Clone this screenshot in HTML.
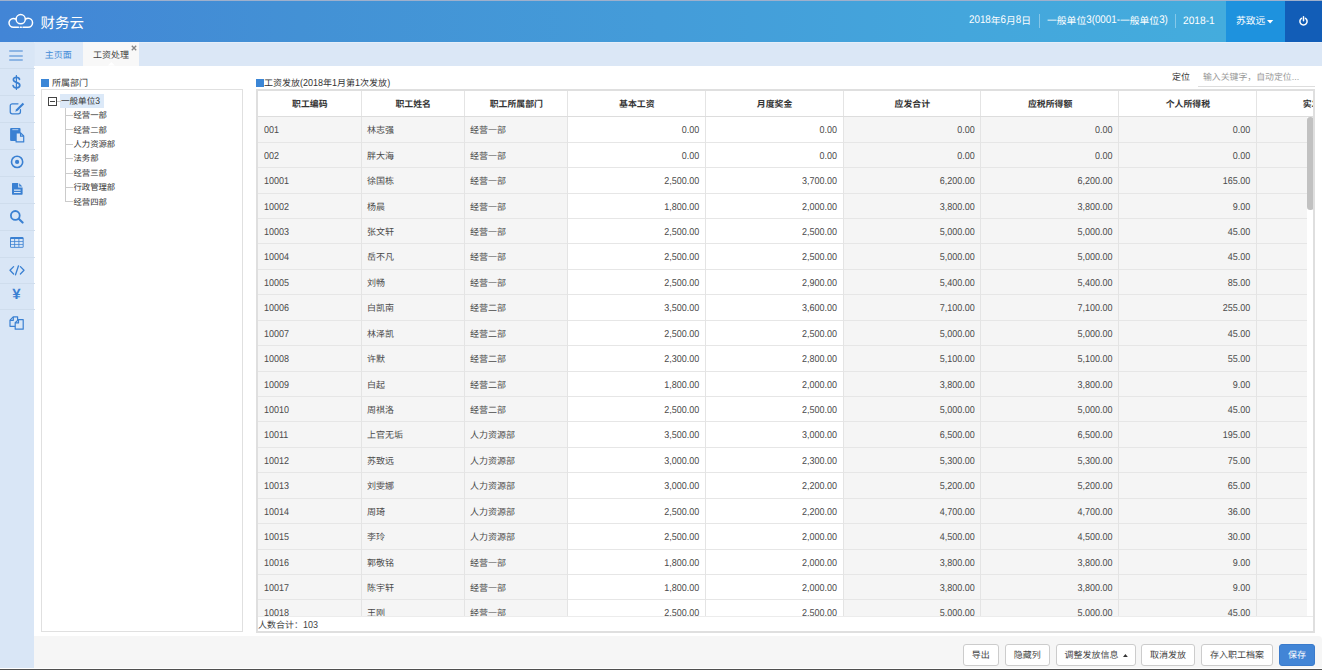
<!DOCTYPE html>
<html lang="zh-CN">
<head>
<meta charset="utf-8">
<title>财务云</title>
<style>
*{box-sizing:border-box;margin:0;padding:0}
html,body{width:1323px;height:671px;overflow:hidden;background:#fff}
body{font-family:"Liberation Sans","Noto Sans CJK SC",sans-serif;font-size:9px;color:#333;position:relative;text-rendering:geometricPrecision}
.abs{position:absolute}
#topline{left:0;top:0;width:1322px;height:1px;background:#9fb0cc}
#hdr{left:0;top:1px;width:1322px;height:41px;background:linear-gradient(90deg,#4285d6 0,#4391d5 300px,#449cd9 660px,#44a6dc 960px,#44acdd 1225px)}
#brand{left:40.5px;top:13.6px;font-size:14.5px;color:#fff;line-height:20px;white-space:nowrap}
.ht{top:0.5px;height:41px;line-height:41px;color:#fff;font-size:9.8px;white-space:nowrap}
.sep{top:14px;width:1px;height:14px;background:rgba(255,255,255,.35)}
#user{left:1226px;top:1px;width:59px;height:41px;background:#1e92de}
#power{left:1285px;top:1px;width:37px;height:41px;background:#125db7}
#side{left:0;top:42px;width:34.3px;height:626px;background:#d9e6f6}
#tabbar{left:0;top:42px;width:1322px;height:24px;background:#dbe7f6}
#tab1{left:34.5px;top:42px;width:48.5px;height:24px;background:#dfeaf8;color:#3f8ad6;text-align:center;line-height:26.5px;padding-right:1px;font-size:9px}
#tab2{left:83px;top:42px;width:56px;height:24px;background:#f8f8f8;color:#444;line-height:26.5px;font-size:9px;padding-left:10px}
#content{left:34.5px;top:66px;width:1287.5px;height:571px;background:#fff}
.sq{width:8px;height:8px;background:#3b86d6}
.ttl{font-size:9px;line-height:12px;color:#333;white-space:nowrap}
#treebox{left:41.2px;top:89.3px;width:201.5px;height:542.4px;border:1.1px solid #e0e0e0;background:#fff}
#tbl{left:256.25px;top:89.2px;width:1058.6px;height:543.4px;background:#dfdfdf}
#tin{left:1.75px;top:1.8px;width:1055.1px;height:540px;background:#fff;overflow:hidden}
.cbg{position:absolute;top:26px;height:500px;background:#f5f5f5}
.hbg{position:absolute;left:0;top:0;width:1056px;height:25px;background:#fff}
.hl{position:absolute;left:0;width:1049px;height:1px;background:#e6e6e6}
.vl{position:absolute;top:0;width:1px;height:526px;background:#e4e4e4}
.th{position:absolute;top:0;height:25px;line-height:26.4px;text-align:center;font-weight:bold;font-size:8.9px;color:#333;white-space:nowrap;overflow:hidden}
#hline{left:0;top:25px;width:1056px;height:1.5px;background:#ddd}
.td{position:absolute;height:25.42px;line-height:26.3px;padding:0 7px 0 6px;font-size:9px;color:#4a4a4a;white-space:nowrap;overflow:hidden}
.td.n{text-align:right;padding-right:6.4px}
.td.d,.td.n{transform:scaleY(1.1);transform-origin:50% 66%}
#tfoot{left:0;top:525.3px;width:1056px;height:15px;background:#fff;line-height:16px;border-top:1px solid #ececec;font-size:9px;color:#444}
#vscroll{left:1049px;top:26px;width:7px;height:500px;background:#fff}
#thumb{left:0.2px;top:0;width:6.6px;height:93.5px;border-radius:3.3px;background:#c1c1c1}
#fbar{left:34.3px;top:636.2px;width:1287.7px;height:31.8px;background:#f6f6f6;border-radius:0 4px 0 0}
#bline{left:0;top:668.8px;width:1322px;height:1px;background:#505050}
.btn{top:644px;height:22px;line-height:21.6px;border:1px solid #ccc;border-radius:3px;background:#fff;color:#444;text-align:center;font-size:9px;white-space:nowrap}
.btn.p{background:#4285d6;border-color:#3a7bcc;color:#fff}
.sitem{left:0;width:34.5px;height:1px;background:#cfdded}
.dg{display:inline-block;transform:scaleY(1.13);transform-origin:50% 72%}
.tn{position:absolute;white-space:nowrap;font-size:8.35px;line-height:12px;color:#333}
</style>
</head>
<body>
<div class="abs" id="topline"></div>
<div class="abs" id="hdr"></div>
<svg class="abs" style="left:7px;top:11.700px" width="28" height="18" viewBox="0 0 28 18"><g fill="none" stroke="#fff" stroke-width="1.500" stroke-linecap="round"><path d="M11.5 15.2H6.4a4.4 4.4 0 0 1 0-8.8c.8 0 1.6.2 2.300.6"/><circle cx="13.7" cy="7.2" r="4.6"/><path d="M18.7 7a4.400 4.400 0 0 1 2.400-.7 4.400 4.400 0 0 1 0 8.900H16"/><path d="M13.300 15.200h1"/></g></svg>
<div class="abs" id="brand">财务云</div>
<div class="abs ht" style="left:969px"><span class="dg">2018</span>年<span class="dg">6</span>月<span class="dg">8</span>日</div>
<div class="abs sep" style="left:1039px"></div>
<div class="abs ht" style="left:1047px">一般单位<span class="dg">3(0001-</span>一般单位<span class="dg">3)</span></div>
<div class="abs sep" style="left:1175px"></div>
<div class="abs ht" style="left:1183px;font-size:10.200px"><span class="dg" style="transform:scaleY(1.06)">2018-1</span></div>
<div class="abs" id="user"></div>
<div class="abs ht" style="left:1236px">苏致远</div>
<svg class="abs" style="left:1266.700px;top:19.700px" width="7" height="4" viewBox="0 0 7 4"><path d="M0 0h6.300L3.150 3.500z" fill="#fff"/></svg>
<div class="abs" id="power"></div>
<svg class="abs" style="left:1298px;top:15px" width="11" height="12" viewBox="0 0 11 12"><g fill="none" stroke="#fff" stroke-width="1.500" stroke-linecap="round"><path d="M3.500 3.400a3.600 3.600 0 1 0 4 0"/><path d="M5.500 1.700v4"/></g></svg>

<div class="abs" id="tabbar"></div>
<div class="abs" style="left:0;top:42px;width:1322px;height:1px;background:#e5eef9"></div>
<div class="abs" id="side"></div>
<div class="abs" id="tab1">主页面</div>
<div class="abs" id="tab2">工资处理</div>
<svg class="abs" style="left:130.800px;top:45.200px" width="6" height="6" viewBox="0 0 6 6"><path d="M.8.800l4.400 4.400M5.200.800L.8 5.200" stroke="#858585" stroke-width="1.350"/></svg>
<div class="abs" id="content"></div>
<svg class="abs" style="left:107.500px;top:62.400px" width="7" height="4" viewBox="0 0 7 4"><path d="M0 3.600L3.400 0 6.800 3.600z" fill="#fff"/></svg>

<!-- sidebar icons -->
<!-- hamburger -->
<div class="abs" style="left:9px;top:50.400px;width:14px;height:2px;background:#8db5e4;border-radius:1px"></div>
<div class="abs" style="left:9px;top:54.700px;width:14px;height:2px;background:#8db5e4;border-radius:1px"></div>
<div class="abs" style="left:9px;top:59.100px;width:14px;height:2px;background:#8db5e4;border-radius:1px"></div>
<div class="abs sitem" style="top:68px"></div>
<div class="abs sitem" style="top:95px"></div>
<div class="abs sitem" style="top:122px"></div>
<div class="abs sitem" style="top:149px"></div>
<div class="abs sitem" style="top:176px"></div>
<div class="abs sitem" style="top:202.500px"></div>
<div class="abs sitem" style="top:229.500px"></div>
<div class="abs sitem" style="top:256.500px"></div>
<div class="abs sitem" style="top:283px"></div>
<div class="abs sitem" style="top:309px"></div>
<!-- dollar -->
<svg class="abs" style="left:12.200px;top:74.500px" width="9" height="15" viewBox="0 0 9 15"><g fill="none" stroke="#3a80d2" stroke-linecap="round"><path d="M4.400.500v14" stroke-width="1.200"/><path d="M7.500 4.300C7.200 2.900 6 2.300 4.400 2.300 2.700 2.300 1.400 3.200 1.400 4.700c0 1.700 1.500 2.200 3.100 2.700 1.700.5 3.300 1.100 3.300 2.900 0 1.600-1.400 2.600-3.300 2.600-1.700 0-3-.8-3.400-2.300" stroke-width="1.700"/></g></svg>
<!-- edit -->
<svg class="abs" style="left:8.500px;top:101.500px" width="16" height="13" viewBox="0 0 16 13"><path d="M9 1.750H3.300A2.050 2.050 0 0 0 1.250 3.800v5.900A2.050 2.050 0 0 0 3.300 11.750h6.100A2.050 2.050 0 0 0 11.450 9.700V7.600" fill="none" stroke="#3a80d2" stroke-width="1.250" stroke-linecap="round"/><path d="M6.200 9.800L7.200 7.300 13.700.800 15.200 2.300 8.700 8.800z" fill="#3a80d2"/></svg>
<!-- paste -->
<svg class="abs" style="left:9.500px;top:128px" width="15" height="15" viewBox="0 0 15 15"><path d="M1.100 0H9.500a1 1 0 0 1 1 1V13H1.100a1 1 0 0 1-1-1V1a1 1 0 0 1 1-1z" fill="#3a80d2"/><path d="M2.300 1h6v1.200H2.300z" fill="#9dbfea"/><path d="M6.100 4.900H10.600L13.700 8V13.900H6.100z" fill="#d9e6f6" stroke="#3a80d2" stroke-width="1.200" stroke-linejoin="round"/><path d="M10.500 5v3.100h3.100" fill="none" stroke="#3a80d2" stroke-width="1.100"/></svg>
<!-- dot circle -->
<svg class="abs" style="left:9.500px;top:155.300px" width="14" height="14" viewBox="0 0 14 14"><circle cx="7.100" cy="6.900" r="5.600" fill="none" stroke="#3a80d2" stroke-width="1.600"/><circle cx="7.100" cy="6.900" r="2.100" fill="#3a80d2"/></svg>
<!-- file text -->
<svg class="abs" style="left:11.500px;top:183.200px" width="11" height="12" viewBox="0 0 11 12"><path d="M.6 0H6.200V4.400H10.600V11.100a.6.600 0 0 1-.6.600H.6a.6.600 0 0 1-.6-.6V.6A.6.600 0 0 1 .6 0zM7.200.300L10.300 3.400H7.200z" fill="#3a80d2"/><path d="M2 6.600h6.600v1.200H2zM2 8.900h6.600v1.200H2z" fill="#d9e6f6"/></svg>
<!-- search -->
<svg class="abs" style="left:9px;top:208.500px" width="15" height="15" viewBox="0 0 15 15"><circle cx="6.300" cy="6.400" r="4.400" fill="none" stroke="#3a80d2" stroke-width="1.800"/><path d="M9.700 9.800l3.900 3.800" stroke="#3a80d2" stroke-width="2.100" stroke-linecap="round"/></svg>
<!-- table -->
<svg class="abs" style="left:9.800px;top:237px" width="14" height="11" viewBox="0 0 14 11"><rect x="0" y="0" width="13.600" height="10.700" rx="1.300" fill="#3a80d2"/><g fill="#d9e6f6"><rect x=".9" y="2" width="3.400" height="2.200"/><rect x="5.100" y="2" width="3.400" height="2.200"/><rect x="9.300" y="2" width="3.400" height="2.200"/><rect x=".9" y="4.900" width="3.400" height="2.200"/><rect x="5.100" y="4.900" width="3.400" height="2.200"/><rect x="9.300" y="4.900" width="3.400" height="2.200"/><rect x=".9" y="7.800" width="3.400" height="2.100"/><rect x="5.100" y="7.800" width="3.400" height="2.100"/><rect x="9.300" y="7.800" width="3.400" height="2.100"/></g></svg>
<!-- code -->
<svg class="abs" style="left:8.500px;top:265px" width="16" height="11" viewBox="0 0 16 11"><g fill="none" stroke="#3a80d2" stroke-width="1.300" stroke-linecap="round" stroke-linejoin="round"><path d="M4.600 1.600L1 5.300l3.600 3.700"/><path d="M11.400 1.600L15 5.300l-3.600 3.700"/><path d="M9.500 .8L6.500 9.800"/></g></svg>
<!-- yen -->
<div class="abs" style="left:12.200px;top:286px;font-size:15px;line-height:18px;color:#3a80d2;font-weight:bold">¥</div>
<!-- copy -->
<svg class="abs" style="left:9px;top:316px" width="16" height="14" viewBox="0 0 16 14"><g fill="none" stroke="#3a80d2" stroke-width="1.200" stroke-linejoin="round"><path d="M6.200 10.300H1V4.100L4.200 .8H8.600V4"/><path d="M4.300 1v3.300H1"/><path d="M6.200 13.200V6.700L9.400 3.600H14.200V13.200z"/><path d="M9.500 3.800v3.100H6.300"/></g></svg>


<!-- left panel -->
<div class="abs sq" style="left:41px;top:78.500px"></div>
<div class="abs ttl" style="left:52px;top:76.500px">所属部门</div>
<div class="abs" id="treebox"></div>
<div class="abs" style="left:60px;top:93.500px;width:44px;height:14.500px;background:#dce9f8"></div>
<div class="abs" style="left:48px;top:96.500px;width:9px;height:9px;border:1px solid #444;background:#fff"></div>
<div class="abs" style="left:50px;top:100.500px;width:5px;height:1px;background:#444"></div>
<div class="abs" style="left:57px;top:100.500px;width:4px;height:0;border-top:1px solid #cbcbcb"></div>
<div class="tn" style="left:61px;top:94.700px;font-size:8.550px">一般单位<span class="dg">3</span></div>
<div class="abs" style="left:65px;top:108px;width:0;height:93.500px;border-left:1px solid #cbcbcb"></div>
<div class="abs" style="left:66px;top:115px;width:6.500px;height:0;border-top:1px solid #cbcbcb"></div>
<div class="tn" style="left:73.500px;top:109.200px">经营一部</div>
<div class="abs" style="left:66px;top:129.400px;width:6.500px;height:0;border-top:1px solid #cbcbcb"></div>
<div class="tn" style="left:73.500px;top:123.600px">经营二部</div>
<div class="abs" style="left:66px;top:143.800px;width:6.500px;height:0;border-top:1px solid #cbcbcb"></div>
<div class="tn" style="left:73.500px;top:138px">人力资源部</div>
<div class="abs" style="left:66px;top:158.200px;width:6.500px;height:0;border-top:1px solid #cbcbcb"></div>
<div class="tn" style="left:73.500px;top:152.400px">法务部</div>
<div class="abs" style="left:66px;top:172.600px;width:6.500px;height:0;border-top:1px solid #cbcbcb"></div>
<div class="tn" style="left:73.500px;top:166.800px">经营三部</div>
<div class="abs" style="left:66px;top:187px;width:6.500px;height:0;border-top:1px solid #cbcbcb"></div>
<div class="tn" style="left:73.500px;top:181.200px">行政管理部</div>
<div class="abs" style="left:66px;top:201.400px;width:6.500px;height:0;border-top:1px solid #cbcbcb"></div>
<div class="tn" style="left:73.500px;top:195.600px">经营四部</div>


<!-- right panel -->
<div class="abs sq" style="left:256px;top:78.500px"></div>
<div class="abs ttl" style="left:264px;top:76.500px">工资发放<span class="dg">(2018</span>年<span class="dg">1</span>月第<span class="dg">1</span>次发放<span class="dg">)</span></div>
<div class="abs ttl" style="left:1172px;top:71px;font-size:9px">定位</div>
<div class="abs ttl" style="left:1203px;top:71px;color:#999;font-size:8.900px">输入关键字，自动定位...</div>
<div class="abs" style="left:1198px;top:86.400px;width:117px;height:1px;background:#ddd"></div>

<div class="abs" id="tbl"><div class="abs" id="tin">
<div class="cbg" style="left:0.00px;width:103.70px"></div>
<div class="cbg" style="left:103.70px;width:103.00px"></div>
<div class="cbg" style="left:206.70px;width:103.30px"></div>
<div class="cbg" style="left:585.50px;width:137.70px"></div>
<div class="cbg" style="left:723.20px;width:137.80px"></div>
<div class="cbg" style="left:861.00px;width:137.70px"></div>
<div class="cbg" style="left:998.70px;width:138.00px"></div>
<div class="hl" style="top:50.82px"></div>
<div class="hl" style="top:76.24px"></div>
<div class="hl" style="top:101.66px"></div>
<div class="hl" style="top:127.08px"></div>
<div class="hl" style="top:152.50px"></div>
<div class="hl" style="top:177.92px"></div>
<div class="hl" style="top:203.34px"></div>
<div class="hl" style="top:228.76px"></div>
<div class="hl" style="top:254.18px"></div>
<div class="hl" style="top:279.60px"></div>
<div class="hl" style="top:305.02px"></div>
<div class="hl" style="top:330.44px"></div>
<div class="hl" style="top:355.86px"></div>
<div class="hl" style="top:381.28px"></div>
<div class="hl" style="top:406.70px"></div>
<div class="hl" style="top:432.12px"></div>
<div class="hl" style="top:457.54px"></div>
<div class="hl" style="top:482.96px"></div>
<div class="hl" style="top:508.38px"></div>
<div class="hl" style="top:533.80px"></div>
<div class="hbg"></div>
<div class="vl" style="left:102.70px"></div>
<div class="vl" style="left:205.70px"></div>
<div class="vl" style="left:309.00px"></div>
<div class="vl" style="left:446.70px"></div>
<div class="vl" style="left:584.50px"></div>
<div class="vl" style="left:722.20px"></div>
<div class="vl" style="left:860.00px"></div>
<div class="vl" style="left:997.70px"></div>
<div class="th" style="left:0.00px;width:103.70px">职工编码</div>
<div class="th" style="left:103.70px;width:103.00px">职工姓名</div>
<div class="th" style="left:206.70px;width:103.30px">职工所属部门</div>
<div class="th" style="left:310.00px;width:137.70px">基本工资</div>
<div class="th" style="left:447.70px;width:137.80px">月度奖金</div>
<div class="th" style="left:585.50px;width:137.70px">应发合计</div>
<div class="th" style="left:723.20px;width:137.80px">应税所得额</div>
<div class="th" style="left:861.00px;width:137.70px">个人所得税</div>
<div class="th" style="left:998.70px;width:127.60px">实发合计</div>
<div class="td d" style="left:0.00px;top:26.40px;width:103.70px">001</div>
<div class="td" style="left:102.90px;top:26.40px;width:103.00px">林志强</div>
<div class="td" style="left:205.90px;top:26.40px;width:103.30px">经营一部</div>
<div class="td n" style="left:310.00px;top:26.40px;width:137.70px">0.00</div>
<div class="td n" style="left:447.70px;top:26.40px;width:137.80px">0.00</div>
<div class="td n" style="left:585.50px;top:26.40px;width:137.70px">0.00</div>
<div class="td n" style="left:723.20px;top:26.40px;width:137.80px">0.00</div>
<div class="td n" style="left:861.00px;top:26.40px;width:137.70px">0.00</div>
<div class="td d" style="left:0.00px;top:51.82px;width:103.70px">002</div>
<div class="td" style="left:102.90px;top:51.82px;width:103.00px">胖大海</div>
<div class="td" style="left:205.90px;top:51.82px;width:103.30px">经营一部</div>
<div class="td n" style="left:310.00px;top:51.82px;width:137.70px">0.00</div>
<div class="td n" style="left:447.70px;top:51.82px;width:137.80px">0.00</div>
<div class="td n" style="left:585.50px;top:51.82px;width:137.70px">0.00</div>
<div class="td n" style="left:723.20px;top:51.82px;width:137.80px">0.00</div>
<div class="td n" style="left:861.00px;top:51.82px;width:137.70px">0.00</div>
<div class="td d" style="left:0.00px;top:77.24px;width:103.70px">10001</div>
<div class="td" style="left:102.90px;top:77.24px;width:103.00px">徐国栋</div>
<div class="td" style="left:205.90px;top:77.24px;width:103.30px">经营一部</div>
<div class="td n" style="left:310.00px;top:77.24px;width:137.70px">2,500.00</div>
<div class="td n" style="left:447.70px;top:77.24px;width:137.80px">3,700.00</div>
<div class="td n" style="left:585.50px;top:77.24px;width:137.70px">6,200.00</div>
<div class="td n" style="left:723.20px;top:77.24px;width:137.80px">6,200.00</div>
<div class="td n" style="left:861.00px;top:77.24px;width:137.70px">165.00</div>
<div class="td d" style="left:0.00px;top:102.66px;width:103.70px">10002</div>
<div class="td" style="left:102.90px;top:102.66px;width:103.00px">杨晨</div>
<div class="td" style="left:205.90px;top:102.66px;width:103.30px">经营一部</div>
<div class="td n" style="left:310.00px;top:102.66px;width:137.70px">1,800.00</div>
<div class="td n" style="left:447.70px;top:102.66px;width:137.80px">2,000.00</div>
<div class="td n" style="left:585.50px;top:102.66px;width:137.70px">3,800.00</div>
<div class="td n" style="left:723.20px;top:102.66px;width:137.80px">3,800.00</div>
<div class="td n" style="left:861.00px;top:102.66px;width:137.70px">9.00</div>
<div class="td d" style="left:0.00px;top:128.08px;width:103.70px">10003</div>
<div class="td" style="left:102.90px;top:128.08px;width:103.00px">张文轩</div>
<div class="td" style="left:205.90px;top:128.08px;width:103.30px">经营一部</div>
<div class="td n" style="left:310.00px;top:128.08px;width:137.70px">2,500.00</div>
<div class="td n" style="left:447.70px;top:128.08px;width:137.80px">2,500.00</div>
<div class="td n" style="left:585.50px;top:128.08px;width:137.70px">5,000.00</div>
<div class="td n" style="left:723.20px;top:128.08px;width:137.80px">5,000.00</div>
<div class="td n" style="left:861.00px;top:128.08px;width:137.70px">45.00</div>
<div class="td d" style="left:0.00px;top:153.50px;width:103.70px">10004</div>
<div class="td" style="left:102.90px;top:153.50px;width:103.00px">岳不凡</div>
<div class="td" style="left:205.90px;top:153.50px;width:103.30px">经营一部</div>
<div class="td n" style="left:310.00px;top:153.50px;width:137.70px">2,500.00</div>
<div class="td n" style="left:447.70px;top:153.50px;width:137.80px">2,500.00</div>
<div class="td n" style="left:585.50px;top:153.50px;width:137.70px">5,000.00</div>
<div class="td n" style="left:723.20px;top:153.50px;width:137.80px">5,000.00</div>
<div class="td n" style="left:861.00px;top:153.50px;width:137.70px">45.00</div>
<div class="td d" style="left:0.00px;top:178.92px;width:103.70px">10005</div>
<div class="td" style="left:102.90px;top:178.92px;width:103.00px">刘畅</div>
<div class="td" style="left:205.90px;top:178.92px;width:103.30px">经营一部</div>
<div class="td n" style="left:310.00px;top:178.92px;width:137.70px">2,500.00</div>
<div class="td n" style="left:447.70px;top:178.92px;width:137.80px">2,900.00</div>
<div class="td n" style="left:585.50px;top:178.92px;width:137.70px">5,400.00</div>
<div class="td n" style="left:723.20px;top:178.92px;width:137.80px">5,400.00</div>
<div class="td n" style="left:861.00px;top:178.92px;width:137.70px">85.00</div>
<div class="td d" style="left:0.00px;top:204.34px;width:103.70px">10006</div>
<div class="td" style="left:102.90px;top:204.34px;width:103.00px">白凯南</div>
<div class="td" style="left:205.90px;top:204.34px;width:103.30px">经营二部</div>
<div class="td n" style="left:310.00px;top:204.34px;width:137.70px">3,500.00</div>
<div class="td n" style="left:447.70px;top:204.34px;width:137.80px">3,600.00</div>
<div class="td n" style="left:585.50px;top:204.34px;width:137.70px">7,100.00</div>
<div class="td n" style="left:723.20px;top:204.34px;width:137.80px">7,100.00</div>
<div class="td n" style="left:861.00px;top:204.34px;width:137.70px">255.00</div>
<div class="td d" style="left:0.00px;top:229.76px;width:103.70px">10007</div>
<div class="td" style="left:102.90px;top:229.76px;width:103.00px">林泽凯</div>
<div class="td" style="left:205.90px;top:229.76px;width:103.30px">经营二部</div>
<div class="td n" style="left:310.00px;top:229.76px;width:137.70px">2,500.00</div>
<div class="td n" style="left:447.70px;top:229.76px;width:137.80px">2,500.00</div>
<div class="td n" style="left:585.50px;top:229.76px;width:137.70px">5,000.00</div>
<div class="td n" style="left:723.20px;top:229.76px;width:137.80px">5,000.00</div>
<div class="td n" style="left:861.00px;top:229.76px;width:137.70px">45.00</div>
<div class="td d" style="left:0.00px;top:255.18px;width:103.70px">10008</div>
<div class="td" style="left:102.90px;top:255.18px;width:103.00px">许默</div>
<div class="td" style="left:205.90px;top:255.18px;width:103.30px">经营二部</div>
<div class="td n" style="left:310.00px;top:255.18px;width:137.70px">2,300.00</div>
<div class="td n" style="left:447.70px;top:255.18px;width:137.80px">2,800.00</div>
<div class="td n" style="left:585.50px;top:255.18px;width:137.70px">5,100.00</div>
<div class="td n" style="left:723.20px;top:255.18px;width:137.80px">5,100.00</div>
<div class="td n" style="left:861.00px;top:255.18px;width:137.70px">55.00</div>
<div class="td d" style="left:0.00px;top:280.60px;width:103.70px">10009</div>
<div class="td" style="left:102.90px;top:280.60px;width:103.00px">白起</div>
<div class="td" style="left:205.90px;top:280.60px;width:103.30px">经营二部</div>
<div class="td n" style="left:310.00px;top:280.60px;width:137.70px">1,800.00</div>
<div class="td n" style="left:447.70px;top:280.60px;width:137.80px">2,000.00</div>
<div class="td n" style="left:585.50px;top:280.60px;width:137.70px">3,800.00</div>
<div class="td n" style="left:723.20px;top:280.60px;width:137.80px">3,800.00</div>
<div class="td n" style="left:861.00px;top:280.60px;width:137.70px">9.00</div>
<div class="td d" style="left:0.00px;top:306.02px;width:103.70px">10010</div>
<div class="td" style="left:102.90px;top:306.02px;width:103.00px">周祺洛</div>
<div class="td" style="left:205.90px;top:306.02px;width:103.30px">经营二部</div>
<div class="td n" style="left:310.00px;top:306.02px;width:137.70px">2,500.00</div>
<div class="td n" style="left:447.70px;top:306.02px;width:137.80px">2,500.00</div>
<div class="td n" style="left:585.50px;top:306.02px;width:137.70px">5,000.00</div>
<div class="td n" style="left:723.20px;top:306.02px;width:137.80px">5,000.00</div>
<div class="td n" style="left:861.00px;top:306.02px;width:137.70px">45.00</div>
<div class="td d" style="left:0.00px;top:331.44px;width:103.70px">10011</div>
<div class="td" style="left:102.90px;top:331.44px;width:103.00px">上官无垢</div>
<div class="td" style="left:205.90px;top:331.44px;width:103.30px">人力资源部</div>
<div class="td n" style="left:310.00px;top:331.44px;width:137.70px">3,500.00</div>
<div class="td n" style="left:447.70px;top:331.44px;width:137.80px">3,000.00</div>
<div class="td n" style="left:585.50px;top:331.44px;width:137.70px">6,500.00</div>
<div class="td n" style="left:723.20px;top:331.44px;width:137.80px">6,500.00</div>
<div class="td n" style="left:861.00px;top:331.44px;width:137.70px">195.00</div>
<div class="td d" style="left:0.00px;top:356.86px;width:103.70px">10012</div>
<div class="td" style="left:102.90px;top:356.86px;width:103.00px">苏致远</div>
<div class="td" style="left:205.90px;top:356.86px;width:103.30px">人力资源部</div>
<div class="td n" style="left:310.00px;top:356.86px;width:137.70px">3,000.00</div>
<div class="td n" style="left:447.70px;top:356.86px;width:137.80px">2,300.00</div>
<div class="td n" style="left:585.50px;top:356.86px;width:137.70px">5,300.00</div>
<div class="td n" style="left:723.20px;top:356.86px;width:137.80px">5,300.00</div>
<div class="td n" style="left:861.00px;top:356.86px;width:137.70px">75.00</div>
<div class="td d" style="left:0.00px;top:382.28px;width:103.70px">10013</div>
<div class="td" style="left:102.90px;top:382.28px;width:103.00px">刘雯娜</div>
<div class="td" style="left:205.90px;top:382.28px;width:103.30px">人力资源部</div>
<div class="td n" style="left:310.00px;top:382.28px;width:137.70px">3,000.00</div>
<div class="td n" style="left:447.70px;top:382.28px;width:137.80px">2,200.00</div>
<div class="td n" style="left:585.50px;top:382.28px;width:137.70px">5,200.00</div>
<div class="td n" style="left:723.20px;top:382.28px;width:137.80px">5,200.00</div>
<div class="td n" style="left:861.00px;top:382.28px;width:137.70px">65.00</div>
<div class="td d" style="left:0.00px;top:407.70px;width:103.70px">10014</div>
<div class="td" style="left:102.90px;top:407.70px;width:103.00px">周琦</div>
<div class="td" style="left:205.90px;top:407.70px;width:103.30px">人力资源部</div>
<div class="td n" style="left:310.00px;top:407.70px;width:137.70px">2,500.00</div>
<div class="td n" style="left:447.70px;top:407.70px;width:137.80px">2,200.00</div>
<div class="td n" style="left:585.50px;top:407.70px;width:137.70px">4,700.00</div>
<div class="td n" style="left:723.20px;top:407.70px;width:137.80px">4,700.00</div>
<div class="td n" style="left:861.00px;top:407.70px;width:137.70px">36.00</div>
<div class="td d" style="left:0.00px;top:433.12px;width:103.70px">10015</div>
<div class="td" style="left:102.90px;top:433.12px;width:103.00px">李玲</div>
<div class="td" style="left:205.90px;top:433.12px;width:103.30px">人力资源部</div>
<div class="td n" style="left:310.00px;top:433.12px;width:137.70px">2,500.00</div>
<div class="td n" style="left:447.70px;top:433.12px;width:137.80px">2,000.00</div>
<div class="td n" style="left:585.50px;top:433.12px;width:137.70px">4,500.00</div>
<div class="td n" style="left:723.20px;top:433.12px;width:137.80px">4,500.00</div>
<div class="td n" style="left:861.00px;top:433.12px;width:137.70px">30.00</div>
<div class="td d" style="left:0.00px;top:458.54px;width:103.70px">10016</div>
<div class="td" style="left:102.90px;top:458.54px;width:103.00px">郭敬铭</div>
<div class="td" style="left:205.90px;top:458.54px;width:103.30px">经营一部</div>
<div class="td n" style="left:310.00px;top:458.54px;width:137.70px">1,800.00</div>
<div class="td n" style="left:447.70px;top:458.54px;width:137.80px">2,000.00</div>
<div class="td n" style="left:585.50px;top:458.54px;width:137.70px">3,800.00</div>
<div class="td n" style="left:723.20px;top:458.54px;width:137.80px">3,800.00</div>
<div class="td n" style="left:861.00px;top:458.54px;width:137.70px">9.00</div>
<div class="td d" style="left:0.00px;top:483.96px;width:103.70px">10017</div>
<div class="td" style="left:102.90px;top:483.96px;width:103.00px">陈宇轩</div>
<div class="td" style="left:205.90px;top:483.96px;width:103.30px">经营一部</div>
<div class="td n" style="left:310.00px;top:483.96px;width:137.70px">1,800.00</div>
<div class="td n" style="left:447.70px;top:483.96px;width:137.80px">2,000.00</div>
<div class="td n" style="left:585.50px;top:483.96px;width:137.70px">3,800.00</div>
<div class="td n" style="left:723.20px;top:483.96px;width:137.80px">3,800.00</div>
<div class="td n" style="left:861.00px;top:483.96px;width:137.70px">9.00</div>
<div class="td d" style="left:0.00px;top:509.38px;width:103.70px">10018</div>
<div class="td" style="left:102.90px;top:509.38px;width:103.00px">王刚</div>
<div class="td" style="left:205.90px;top:509.38px;width:103.30px">经营一部</div>
<div class="td n" style="left:310.00px;top:509.38px;width:137.70px">2,500.00</div>
<div class="td n" style="left:447.70px;top:509.38px;width:137.80px">2,500.00</div>
<div class="td n" style="left:585.50px;top:509.38px;width:137.70px">5,000.00</div>
<div class="td n" style="left:723.20px;top:509.38px;width:137.80px">5,000.00</div>
<div class="td n" style="left:861.00px;top:509.38px;width:137.70px">45.00</div>
<div class="abs" id="hline"></div>
<div class="abs" id="vscroll"><div class="abs" id="thumb"></div></div>
<div class="abs" id="tfoot">人数合计：<span class="dg">103</span></div>
</div></div>

<div class="abs" id="fbar"></div>
<div class="abs" id="bline"></div>
<div class="abs btn" style="left:963px;width:35.500px">导出</div>
<div class="abs btn" style="left:1005px;width:44.500px">隐藏列</div>
<div class="abs btn" style="left:1056px;width:79.500px;padding-right:8.500px">调整发放信息<svg class="abs" style="left:65.500px;top:8.800px" width="5" height="3" viewBox="0 0 5 3"><path d="M0 3L2.400 0 4.800 3z" fill="#333"/></svg></div>
<div class="abs btn" style="left:1141px;width:54px">取消发放</div>
<div class="abs btn" style="left:1201px;width:72px">存入职工档案</div>
<div class="abs btn p" style="left:1279px;width:36px">保存</div>
</body>
</html>
